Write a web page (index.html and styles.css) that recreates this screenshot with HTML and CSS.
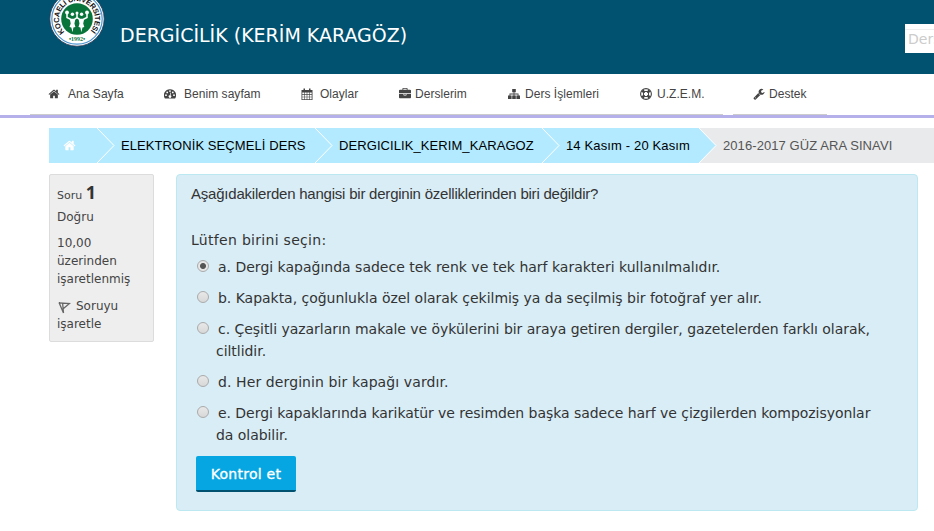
FILE: index.html
```html
<!DOCTYPE html>
<html lang="tr">
<head>
<meta charset="utf-8">
<title>2016-2017 GÜZ ARA SINAVI</title>
<link rel="stylesheet" href="styles.css">
</head>
<body>
<header class="header">
  <svg class="logo" viewBox="0 0 56 56" width="56" height="56">
    <defs><path id="ring-top" d="M15.600 41A17.900 17.900 0 1 1 40.400 41"/></defs>
    <circle cx="28" cy="28" r="27.2" fill="#fff" stroke="#293650" stroke-width=".8"/>
    <circle cx="28" cy="28" r="25.2" fill="none" stroke="#4b94d0" stroke-width="1.2"/>
    <circle cx="28" cy="28" r="15.800" fill="#08743a"/>
    <text class="seal"><textPath href="#ring-top" textLength="83">KOCAELİ ÜNİVERSİTESİ</textPath></text>
    <text class="seal-year" x="28" y="50" text-anchor="middle">•1992•</text>
    <g fill="#fff"><circle cx="23.400" cy="23.300" r="1.700"/><circle cx="32.600" cy="23.300" r="1.700"/><circle cx="18" cy="21.500" r="1.900"/><circle cx="38" cy="21.500" r="1.900"/><circle cx="28" cy="22" r="1.500"/><path d="M20.800 28h5.600l-1 4.500 1 3.500-2 .6-.8 4.600-1.300-4.600-1.800-.6 1.200-3.500zM29.600 28h5.600l-1 4.500 1.100 3.500-1.800.6-1.200 4.600-.9-4.600-1.900-.6 1-3.500z"/><path d="M18 22v4.500l4 2h3l3-2v-3.500 3.500l3 2h3l4-2V22" fill="none" stroke="#fff" stroke-width="1.500"/></g>
  </svg>
  <h1 class="title">DERGİCİLİK (KERİM KARAGÖZ)</h1>
  <div class="search">Ders ara</div>
</header>
<nav class="nav">
  <a class="nav-item home"><svg viewBox="0 0 1792 1792"><path d="M1472 992v480q0 26-19 45t-45 19h-384v-384h-256v384h-384q-26 0-45-19t-19-45v-480q0-1 .5-3t.5-3l575-474 575 474q1 2 1 6zm223-69l-62 74q-8 9-21 11h-3q-13 0-21-7l-692-577-692 577q-12 8-24 7-13-2-21-11l-62-74q-8-10-7-23.5t11-21.5l719-599q32-26 76-26t76 26l244 204v-195q0-14 9-23t23-9h192q14 0 23 9t9 23v408l219 182q10 8 11 21.5t-7 23.5z"/></svg><span>Ana Sayfa</span></a>
  <a class="nav-item dash"><svg viewBox="0 0 12 12"><path fill-rule="evenodd" d="M6 1.2a6 6 0 0 0-5.1 9.3h10.200A6 6 0 0 0 6 1.200zM2 6.300a.9.9 0 1 1 0 1.800.9.9 0 0 1 0-1.800zM3.200 3.500a.9.9 0 1 1 0 1.800.9.9 0 0 1 0-1.800zM6 2.200a.9.9 0 1 1 0 1.800.9.9 0 0 1 0-1.800zM8.800 3.500a.9.9 0 1 1 0 1.800.9.9 0 0 1 0-1.800zM10 6.300a.9.9 0 1 1 0 1.800.9.9 0 0 1 0-1.800zM6.500 4.600l.6.2-.6 2.500a1.300 1.300 0 1 1-.7-.1z"/></svg><span>Benim sayfam</span></a>
  <a class="nav-item cal"><svg viewBox="0 0 12 12"><path fill-rule="evenodd" d="M.5 2H2.500V.5h1.500V2h4V.5h1.500V2h2v10H.5zM1.300 4.500v1.800h1.900V4.500zm2.500 0v1.800h1.900V4.500zm2.500 0v1.800h1.900V4.500zm2.500 0v1.800h1.900V4.500zM1.300 6.900v1.800h1.900V6.900zm2.500 0v1.800h1.900V6.900zm2.500 0v1.800h1.900V6.900zm2.500 0v1.800h1.900V6.900zM1.300 9.300v1.900h1.900V9.300zm2.500 0v1.900h1.900V9.300zm2.500 0v1.900h1.900V9.300zm2.500 0v1.900h1.900V9.300z"/></svg><span>Olaylar</span></a>
  <a class="nav-item case"><svg viewBox="0 0 1792 1792"><path d="M640 256h512v-128h-512v128zm1152 640v480q0 66-47 113t-113 47h-1472q-66 0-113-47t-47-113v-480h672v160q0 26 19 45t45 19h320q26 0 45-19t19-45v-160h672zm-768 0v128h-256v-128h256zm768-480v384h-1792v-384q0-66 47-113t113-47h352v-160q0-40 28-68t68-28h576q40 0 68 28t28 68v160h352q66 0 113 47t47 113z"/></svg><span>Derslerim</span></a>
  <a class="nav-item tree"><svg viewBox="0 0 12 12"><path d="M4.200 1h3.600v3.300H6.400v1.300h4.100v2h1.500V11H8.400V7.600h1.300V6.400H6.400v1.200h1.400V11H4.200V7.600h1.400V6.400H2.300v1.200h1.300V11H0V7.600h1.500v-2h4.100V4.300H4.200z"/></svg><span>Ders İşlemleri</span></a>
  <a class="nav-item ring"><svg viewBox="0 0 12 12"><circle cx="6" cy="6" r="5.400" fill="none" stroke="#444" stroke-width="1.100"/><circle cx="6" cy="6" r="2.700" fill="none" stroke="#444" stroke-width="1"/><path d="M1.100 3.700l2.400-2.500L5.200 4 4 5.200zM8.500 1.200l2.400 2.500L8 5.200 6.800 4zM10.900 8.300l-2.400 2.500L6.800 8 8 6.800zM3.500 10.800L1.100 8.300 4 6.800 5.200 8z"/></svg><span>U.Z.E.M.</span></a>
  <a class="nav-item wrench"><svg viewBox="0 0 1792 1792"><path d="M448 1472q0-26-19-45t-45-19-45 19-19 45 19 45 45 19 45-19 19-45zm644-420l-682 682q-37 37-90 37-52 0-91-37l-106-108q-38-36-38-90 0-53 38-91l681-681q39 98 114.500 173.500t173.500 114.500zm634-435q0 39-23 106-47 134-164.500 217.500t-258.500 83.500q-185 0-316.500-131.500t-131.500-316.500 131.500-316.500 316.500-131.500q58 0 121.500 16.500t107.500 46.500q16 11 16 28t-16 28l-293 169v224l193 107q5-3 79-48.500t135.500-81 70.500-35.500q15 0 23.500 10t8.500 25z"/></svg><span>Destek</span></a>
</nav>
<div class="underline"><i></i><i></i></div>
<div class="crumbs">
  <a class="crumb c-home"><svg class="crumb-icon" viewBox="0 0 1792 1792"><path d="M1472 992v480q0 26-19 45t-45 19h-384v-384h-256v384h-384q-26 0-45-19t-19-45v-480q0-1 .5-3t.5-3l575-474 575 474q1 2 1 6zm223-69l-62 74q-8 9-21 11h-3q-13 0-21-7l-692-577-692 577q-12 8-24 7-13-2-21-11l-62-74q-8-10-7-23.500t11-21.500l719-599q32-26 76-26t76 26l244 204v-195q0-14 9-23t23-9h192q14 0 23 9t9 23v408l219 182q10 8 11 21.500t-7 23.500z"/></svg></a>
  <svg class="chev" viewBox="0 0 18 35"><path d="M0 0L17 17.500L0 35z"/><path class="edge" d="M0 0L17 17.500L0 35"/></svg>
  <a class="crumb c1">ELEKTRONİK SEÇMELİ DERS</a>
  <svg class="chev" viewBox="0 0 18 35"><path d="M0 0L17 17.500L0 35z"/><path class="edge" d="M0 0L17 17.500L0 35"/></svg>
  <a class="crumb c2">DERGICILIK_KERIM_KARAGOZ</a>
  <svg class="chev" viewBox="0 0 18 35"><path d="M0 0L17 17.500L0 35z"/><path class="edge" d="M0 0L17 17.500L0 35"/></svg>
  <a class="crumb c3">14 Kasım - 20 Kasım</a>
  <svg class="chev last" viewBox="0 0 18 35"><path d="M0 0L17 17.500L0 35z"/><path class="edge" d="M0 0L17 17.500L0 35"/></svg>
  <span class="current">2016-2017 GÜZ ARA SINAVI</span>
</div>
<main class="main">
  <aside class="info">
    <h3>Soru <b>1</b></h3>
    <p class="state">Doğru</p>
    <p class="grade">10,00<br>üzerinden<br>işaretlenmiş</p>
    <p class="flag"><svg viewBox="0 0 13 13" width="13" height="13"><path d="M1 1.500L5.500 12M4.600 2L5.500 12M1 1.800L11.500 2.500L5.500 7.500" fill="none" stroke="#666" stroke-width="1.300"/></svg>Soruyu<br>işaretle</p>
  </aside>
  <section class="question">
    <p class="stem">Aşağıdakilerden hangisi bir derginin özelliklerinden biri değildir?</p>
    <p class="prompt">Lütfen birini seçin:</p>
    <div class="opt"><i class="radio on"></i><p>a. Dergi kapağında sadece tek renk ve tek harf karakteri kullanılmalıdır.</p></div>
    <div class="opt opt-b"><i class="radio"></i><p>b. Kapakta, çoğunlukla özel olarak çekilmiş ya da seçilmiş bir fotoğraf yer alır.</p></div>
    <div class="opt opt-c"><i class="radio"></i><p>c. Çeşitli yazarların makale ve öykülerini bir araya getiren dergiler, gazetelerden farklı olarak,<br>ciltlidir.</p></div>
    <div class="opt opt-d"><i class="radio"></i><p>d. Her derginin bir kapağı vardır.</p></div>
    <div class="opt opt-e"><i class="radio"></i><p>e. Dergi kapaklarında karikatür ve resimden başka sadece harf ve çizgilerden kompozisyonlar<br>da olabilir.</p></div>
    <button class="check">Kontrol et</button>
  </section>
</main>
</body>
</html>
```

FILE: styles.css
```css
* { box-sizing: border-box; }
body { margin: 0; width: 934px; height: 531px; overflow: hidden; background: #fff; color: #333; font-family: "DejaVu Sans", sans-serif; }
p, h1, h3 { margin: 0; font-weight: normal; }
.header { height: 74px; background: #005270; display: flex; align-items: flex-start; padding-left: 49px; overflow: hidden; }
.logo { margin-top: -9px; flex: none; }
.seal { font: bold 7.5px "Liberation Sans", sans-serif; fill: #111; }
.seal-year { font: bold 6px "Liberation Serif", serif; fill: #08743a; }
.title { margin: 23px 0 0 15px; width: 785px; flex: none; font-size: 19px; line-height: 24px; color: #fff; white-space: nowrap; }
.search { margin-top: 24px; flex: none; width: 120px; height: 29px; background: #fff; border-top: 5px solid #fff; box-shadow: inset 0 1px #eee; padding-left: 3px; font-size: 14px; line-height: 20px; color: #ccc; }
.nav { height: 40px; padding-left: 48px; display: flex; align-items: center; font: 12px/16px "Liberation Sans", sans-serif; letter-spacing: .04px; color: #444; }
.nav-item { display: flex; align-items: center; white-space: nowrap; flex: none; }
.nav-item svg { width: 12px; height: 12px; fill: #444; flex: none; }
.home { width: 116px; } .home svg { margin-right: 8px; }
.dash { width: 137px; } .dash svg { margin-right: 8px; }
.cal { width: 98px; } .cal svg { margin-right: 7px; }
.case { width: 109px; } .case svg { margin-right: 4px; }
.tree { width: 132px; } .tree svg { margin-right: 5px; }
.ring { width: 113px; } .ring svg { margin-right: 5px; }
.wrench svg { margin-right: 4px; }
.underline { height: 4px; border-bottom: 3px solid #b5afea; padding-left: 30px; display: flex; gap: 10px; }
.underline i { height: 1px; width: 693px; background: #ccc; }
.underline i + i { width: 94px; }
.crumbs { margin: 10px 0 0 49px; height: 35px; display: flex; background: #e8eaeb; font: 13px/36px "Liberation Sans", sans-serif; letter-spacing: .08px; color: #000; white-space: nowrap; }
.crumb { background: #b3eaff; flex: none; display: flex; }
.chev { width: 18px; height: 35px; flex: none; background: #b3eaff; fill: #b3eaff; }
.chev.last { background: #e8eaeb; }
.edge { fill: none; stroke: #fff; stroke-width: 1; }
.c-home { width: 48px; align-items: center; padding-left: 14px; }
.crumb-icon { width: 13px; height: 13px; fill: #fff; }
.c1 { width: 200px; padding-left: 6px; }
.c2 { width: 209px; padding-left: 6px; }
.c3 { width: 139px; padding-left: 6px; letter-spacing: .14px; }
.current { padding-left: 6px; color: #555; }
.main { display: flex; align-items: flex-start; margin: 11px 0 0 49px; gap: 22px; }
.info { width: 105px; height: 168px; background: #eee; border: 1px solid #dcdcdc; border-radius: 2px; padding: 6px 7px; font-size: 12px; line-height: 18px; color: #444; }
.info h3 { font-size: 11px; line-height: 22px; height: 22px; }
.info b { font: bold 18px/22px "Noto Sans", sans-serif; color: #333; }
.state { margin-top: 5px; }
.grade { margin-top: 8px; }
.flag { margin-top: 9px; }
.flag svg { vertical-align: -4px; margin: 0 5px 0 1px; }
.question { width: 742px; height: 337px; background: #d9edf6; border: 1px solid #bce8f1; border-radius: 4px; padding: 8px 14px; font-size: 14px; line-height: 22px; white-space: nowrap; }
.stem { font-family: "Liberation Sans", sans-serif; font-size: 15px; letter-spacing: -.22px; margin-bottom: 24px; }
.prompt { margin-bottom: 5px; letter-spacing: .3px; }
.opt { display: flex; padding-left: 6px; margin-bottom: 9px; }
.opt p { padding-left: 7px; text-indent: 2px; }
.opt-b { letter-spacing: -.028px; }
.opt-c { letter-spacing: -.04px; }
.opt-d { letter-spacing: .1px; }
.opt-e { letter-spacing: -.048px; }
.radio { width: 12px; height: 12px; margin-top: 4px; border: 1px solid #aaa; border-radius: 50%; background: linear-gradient(#e8e8e8, #d8d8d8); flex: none; }
.radio.on { background: radial-gradient(circle, #555 0 2.500px, #e6e6e6 3.500px); }
.check { display: block; margin: 10px 0 0 5px; width: 100px; height: 36px; border: 0; border-bottom: 2px solid #005270; border-radius: 2px; background: #05a6e1; color: #fff; padding: 2px 0 0; font: 14px "DejaVu Sans", sans-serif; letter-spacing: .25px; -webkit-text-stroke: .35px #fff; }
```
